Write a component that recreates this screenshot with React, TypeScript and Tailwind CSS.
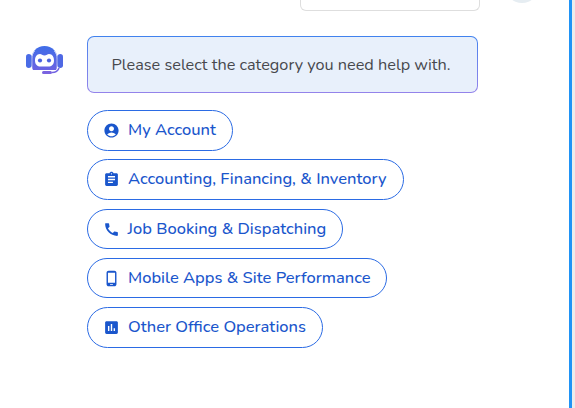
import { MdAccountCircle, MdAssignment, MdCall, MdOutlinePhoneAndroid, MdAssessment } from "react-icons/md";

const categories = [
  { label: "My Account", icon: MdAccountCircle, width: "w-[146.500px]", gap: "gap-[8px]" },
  { label: "Accounting, Financing, & Inventory", icon: MdAssignment, width: "w-[317.500px]", gap: "gap-[8px]" },
  { label: "Job Booking & Dispatching", icon: MdCall, width: "w-[256.500px]", gap: "gap-[7.500px]" },
  { label: "Mobile Apps & Site Performance", icon: MdOutlinePhoneAndroid, width: "w-[300.500px]", gap: "gap-[8px]" },
  { label: "Other Office Operations", icon: MdAssessment, width: "w-[236.500px]", gap: "gap-[8px]" },
];

function BotIcon() {
  return (
    <svg width="37" height="28" viewBox="0 0 37 28" fill="none">
      <defs>
        <linearGradient id="bot" x1="0" y1="0" x2="0" y2="1">
          <stop offset="0" stopColor="#3f6ee8" />
          <stop offset="1" stopColor="#6a62e2" />
        </linearGradient>
      </defs>
      <path
        d="M7 24C5 20 5 17 5 14 5 6 11 0 18.500 0S32 6 32 14c0 3 0 6-2 10Z"
        fill="url(#bot)"
      />
      <path d="M5.800 22V13C5.800 9 7 7 8.500 5" stroke="#fff" strokeWidth="0.800" />
      <path d="M31.200 22V13C31.200 9 30 7 28.500 5" stroke="#fff" strokeWidth="0.800" />
      <rect x="0" y="8" width="5.500" height="14" rx="2.750" fill="#4a6ce6" />
      <rect x="31.500" y="8" width="5.500" height="14" rx="2.750" fill="#4f68e4" />
      <path
        d="M14 8c1.500 0 2.500 1.500 4.500 1.500S21.500 8 23 8c3.500 0 5 3 5 6.500 0 4-2.500 6-5.500 6h-8c-3 0-5.500-2-5.500-6C9 11 10.500 8 14 8Z"
        fill="#fff"
      />
      <circle cx="14" cy="14.500" r="2.100" fill="#4a62e0" />
      <circle cx="23" cy="14.500" r="2.100" fill="#4a62e0" />
      <path d="M33 22c-1 3-3 4.500-7 4.500" stroke="#7264e2" strokeWidth="1.600" />
      <rect x="16" y="25" width="10" height="3" rx="1.500" fill="#7a63e0" />
    </svg>
  );
}

export default function App() {
  return (
    <div className="flex h-[408px] w-[575px] overflow-hidden bg-white font-['Nunito','Noto_Sans',sans-serif]">
      <div className="flex-1">
        <div className="flex h-[36px] items-start">
          <div className="ml-[300px] h-[11px] w-[180px] rounded-b-[6px] border border-t-0 border-[#dedede]" />
          <div className="ml-[25px] mt-[-33px] h-[36px] w-[34px] shrink-0 rounded-full bg-[#e6edf2]" />
        </div>
        <div className="flex">
          <div className="ml-[26px] mt-[10px] w-[60.500px] shrink-0">
            <BotIcon />
          </div>
          <div className="flex flex-col">
            <div className="h-[57px] w-[391px] rounded-[7px] bg-gradient-to-b from-[#3f82ee] to-[#9483ea] p-px">
              <div className="flex h-full items-center rounded-[6px] bg-[#e8f0fb] pl-[24px] pt-[1.500px] text-[16.250px] text-[#47484d]">
                Please select the category you need help with.
              </div>
            </div>
            <div className="mt-[17px] flex flex-col gap-[8.750px]">
              {categories.map((c) => (
                <button
                  key={c.label}
                  type="button"
                  className={`flex h-[40.500px] ${c.width} items-center ${c.gap} rounded-full border border-[#2b6be4] bg-white pl-[15.500px] pt-[0.500px] text-[16.500px] font-medium text-[#1a56cc]`}
                >
                  <c.icon className="h-[17px] w-[17px] shrink-0" />
                  {c.label}
                </button>
              ))}
            </div>
          </div>
        </div>
      </div>
      <div className="h-full w-[3px] bg-[#2093f5]" />
      <div className="h-full w-[3px] bg-[#ececec]" />
    </div>
  );
}
